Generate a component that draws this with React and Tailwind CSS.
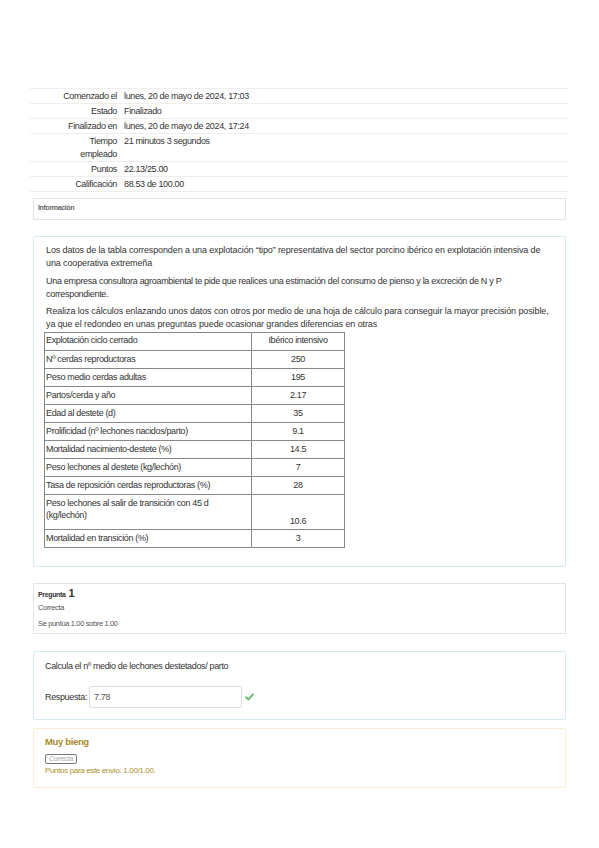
import React from 'react';

const summary = [
  { label: 'Comenzado el', value: 'lunes, 20 de mayo de 2024, 17:03' },
  { label: 'Estado', value: 'Finalizado' },
  { label: 'Finalizado en', value: 'lunes, 20 de mayo de 2024, 17:24' },
  { label: 'Tiempo empleado', value: '21 minutos 3 segundos' },
  { label: 'Puntos', value: '22.13/25.00' },
  { label: 'Calificación', value: '88.53 de 100.00' },
];

const rows = [
  ['Nº cerdas reproductoras', '250'],
  ['Peso medio cerdas adultas', '195'],
  ['Partos/cerda y año', '2.17'],
  ['Edad al destete (d)', '35'],
  ['Prolificidad (nº lechones nacidos/parto)', '9.1'],
  ['Mortalidad nacimiento-destete (%)', '14.5'],
  ['Peso lechones al destete (kg/lechón)', '7'],
  ['Tasa de reposición cerdas reproductoras (%)', '28'],
  ['Peso lechones al salir de transición con 45 d (kg/lechón)', '10.6'],
  ['Mortalidad en transición (%)', '3'],
];

const CheckIcon = () => (
  <svg width="9" height="8" viewBox="0 0 9 8" className="shrink-0">
    <path d="M1 4.2 L3.4 6.5 L8 1.4" fill="none" stroke="#5cb85c" strokeWidth="1.8" strokeLinecap="round" strokeLinejoin="round" />
  </svg>
);

export default function App() {
  return (
    <div
      className="w-[599px] min-h-[848px] bg-white pt-[88px] px-[30px] pb-[60px] text-[#333] tracking-[-0.35px]"
      style={{ fontFamily: '"Liberation Sans", Arial, sans-serif' }}
    >
      {/* Summary */}
      <div className="border-b border-[#eee] text-[9px] leading-[13px]">
        {summary.map((row) => (
          <div key={row.label} className="grid grid-cols-[89px_1fr] border-t border-[#eee] pt-[1px]">
            <div className={`text-right pr-[2px] ${row.label === 'Tiempo empleado' ? 'pl-[44px]' : ''}`}>{row.label}</div>
            <div className="pl-[5px]">{row.value}</div>
          </div>
        ))}
      </div>

      {/* Info */}
      <div className="mx-[3px] mt-[6px] h-[22px] border border-[#e3e3e3] px-[4px] pt-[4px] text-[7px] font-bold text-[#666]">
        Información
      </div>

      {/* Question text */}
      <div className="mx-[3px] mt-[16px] border border-[#d3ecf1] rounded-[2px] pl-[10px] pr-[8px] pt-[7px] pb-[18px] text-[9px] leading-[13px]">
        <p className="pl-[2px] tracking-[-0.12px]">
          Los datos de la tabla corresponden a una explotación “tipo” representativa del sector porcino ibérico en explotación intensiva de
          <br />
          una cooperativa extremeña
        </p>
        <p className="mt-[5px] pl-[2px] tracking-[-0.3px]">
          Una empresa consultora agroambiental te pide que realices una estimación del consumo de pienso y la excreción de N y P
          <br />
          correspondiente.
        </p>
        <p className="mt-[4px] pl-[2px] tracking-[-0.1px]">
          Realiza los cálculos enlazando unos datos con otros por medio de una hoja de cálculo para conseguir la mayor precisión posible,
          <br />
          ya que el redondeo en unas preguntas puede ocasionar grandes diferencias en otras
        </p>
        <table className="mt-[1px] w-[301px] border-collapse text-[9px] leading-[12px]">
          <tbody>
            <tr>
              <td className="w-[207px] h-[18px] border border-[#888] pl-[1px] pt-[1px] align-top">Explotación ciclo cerrado</td>
              <td className="border border-[#888] text-center align-top pt-[1px]">Ibérico intensivo</td>
            </tr>
            {rows.map(([k, v]) => (
              <tr key={k}>
                <td className={`border border-[#888] pl-[1px] pt-[2px] align-top ${k.length > 50 ? 'h-[35px] pr-[40px]' : 'h-[18px]'}`}>{k}</td>
                <td className={`border border-[#888] text-center pt-[2px] ${k.length > 50 ? 'align-bottom pb-[2px]' : 'align-top'}`}>{v}</td>
              </tr>
            ))}
          </tbody>
        </table>
      </div>

      {/* Question info */}
      <div className="mx-[3px] mt-[16px] h-[51px] border border-[#e3e3e3] pl-[4px] pt-[4px] text-[7.5px] leading-[10px] text-[#555]">
        <div className="flex items-baseline gap-[3px] font-bold text-[#333]">
          <span className="text-[7px]">Pregunta</span>
          <span className="text-[11px]">1</span>
        </div>
        <div className="mt-[3px]">Correcta</div>
        <div className="mt-[6px]">Se puntúa 1.00 sobre 1.00</div>
      </div>

      {/* Question */}
      <div className="mx-[3px] mt-[17px] h-[69px] border border-[#d3ecf1] rounded-[2px] pl-[11px] pt-[8px] text-[9px] leading-[13px]">
        <p>Calcula el nº medio de lechones destetados/ parto</p>
        <div className="mt-[13px] flex items-center">
          <span>Respuesta:</span>
          <div className="ml-[2px] w-[153px] h-[22px] border border-[#ddd] rounded-[2px] pl-[4px] flex items-center text-[#555]">
            7.78
          </div>
          <span className="ml-[3px]"><CheckIcon /></span>
        </div>
      </div>

      {/* Feedback */}
      <div className="mx-[3px] mt-[8px] h-[60px] border border-[#fbeed0] rounded-[2px] pl-[11px] pt-[6px]">
        <div className="text-[9.5px] font-bold text-[#a88a2e] leading-[14px]">Muy bieng</div>
        <div className="mt-[5px] w-fit border-[1.5px] border-[#777] rounded-[2px] px-[3px] text-[7px] leading-[8px] text-[#aaa]">
          Correcta
        </div>
        <div className="mt-[2px] text-[8px] leading-[10px] text-[#b0902c]">Puntos para este envío: 1.00/1.00.</div>
      </div>
    </div>
  );
}
